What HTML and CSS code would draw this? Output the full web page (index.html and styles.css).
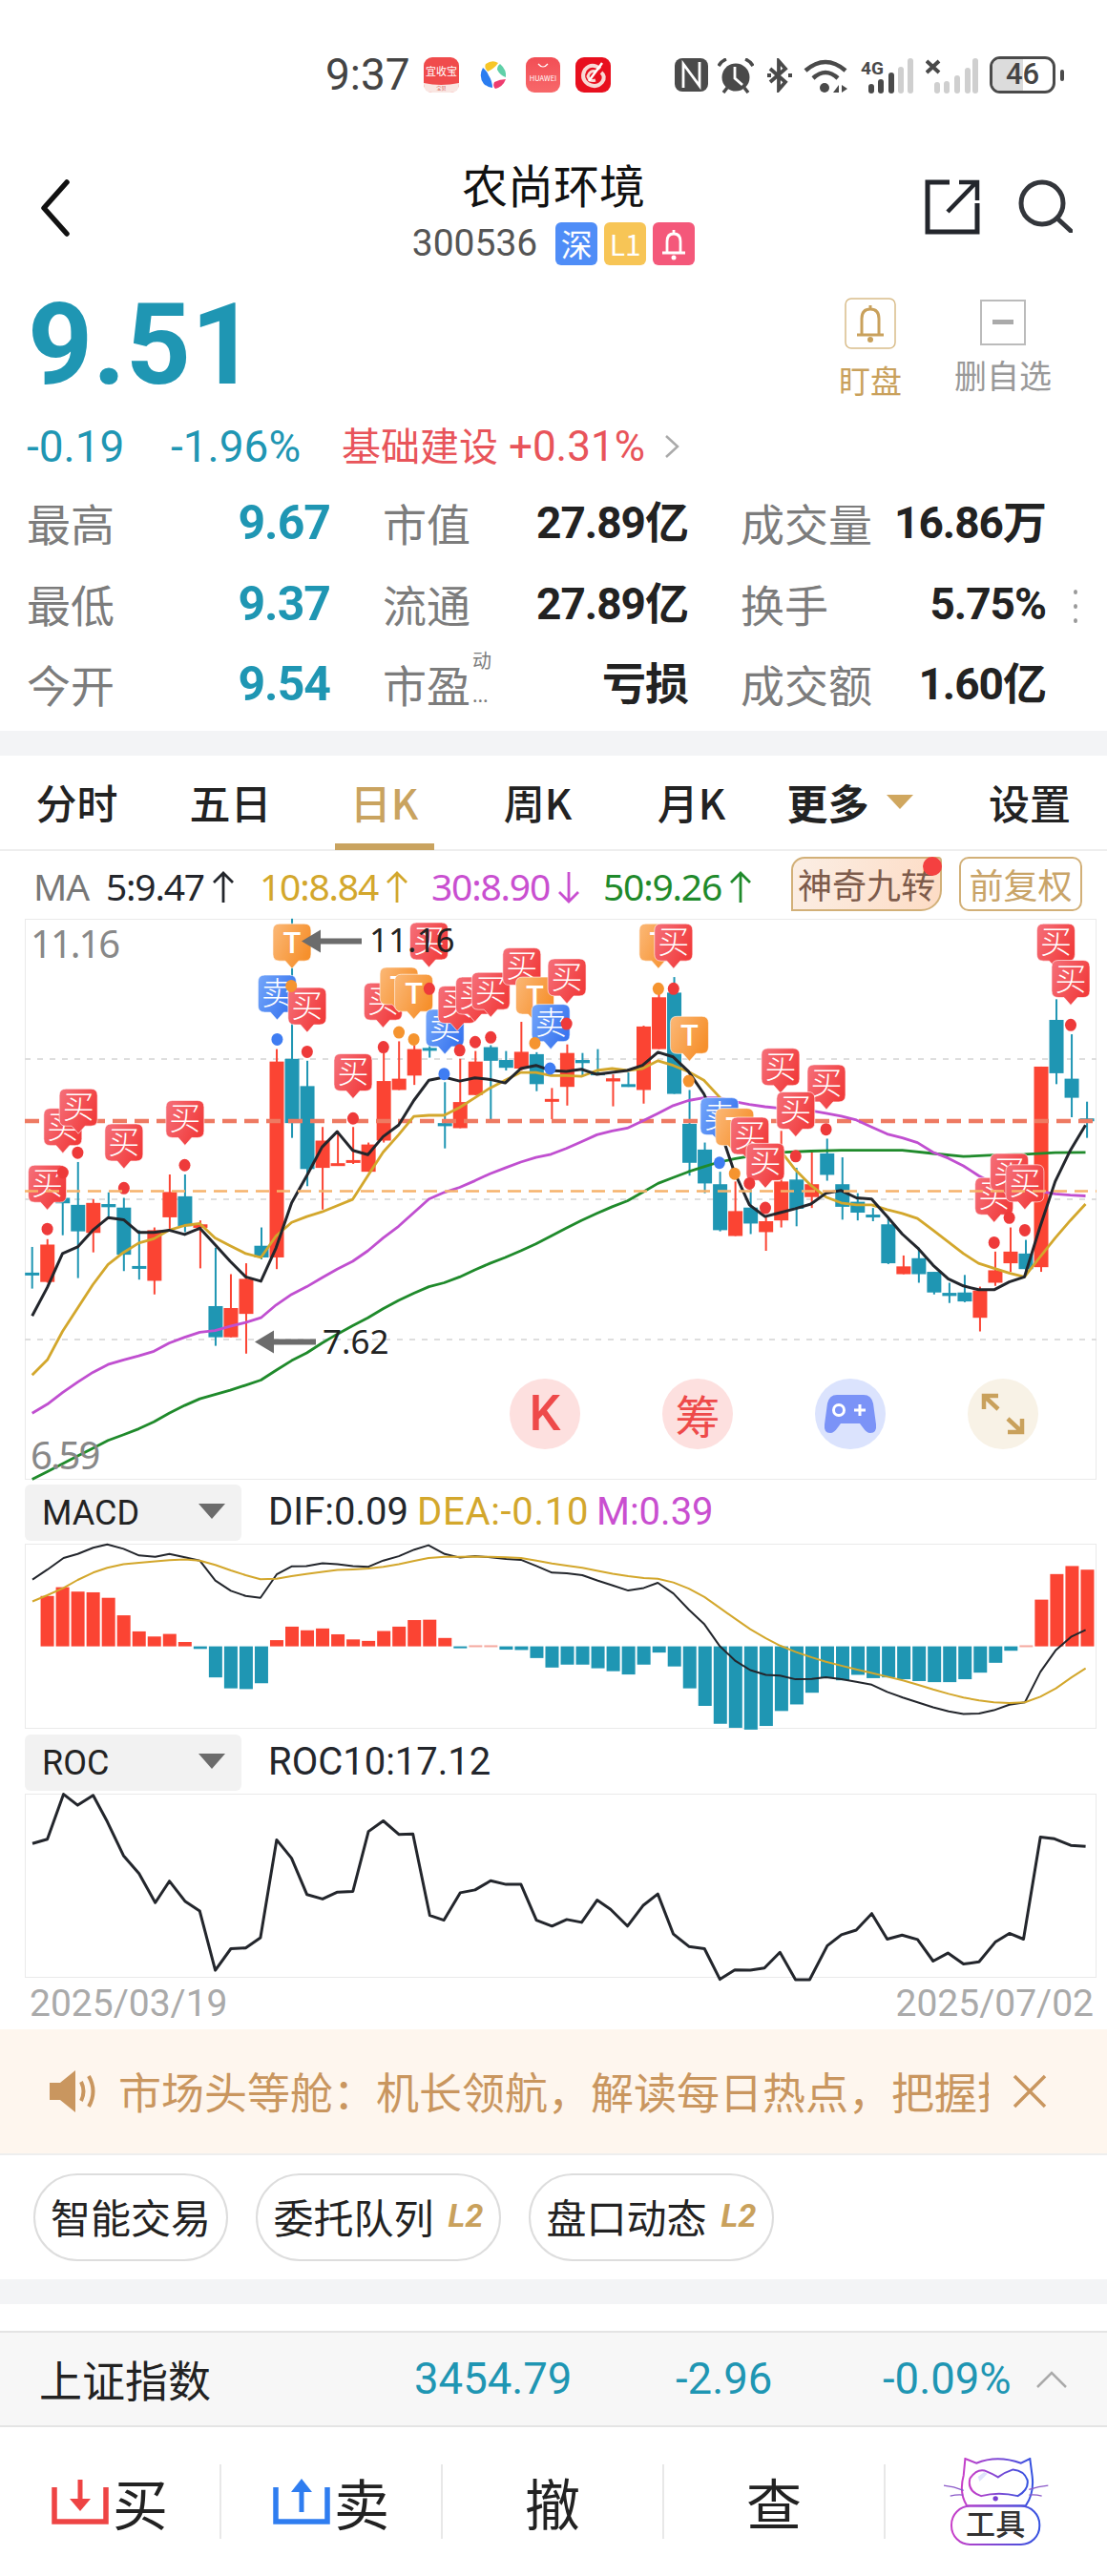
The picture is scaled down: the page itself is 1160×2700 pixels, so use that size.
FILE: index.html
```html
<!DOCTYPE html>
<html lang="zh-CN">
<head>
<meta charset="utf-8">
<title>农尚环境</title>
<link rel="stylesheet" href="styles.css">
</head>
<body>
<div class="page">

  <div class="status">
    <span class="clock">9:37</span>
    <svg class="app" width="37" height="37" viewBox="0 0 37 37"><rect width="37" height="37" rx="9" fill="#f04b4c"/><path d="M0 27 Q18 31 37 27 V28 Q37 37 28 37 H9 Q0 37 0 28Z" fill="#f9e6e2"/><text x="18.5" y="19" class="app-txt" font-size="11">宜收宝</text><text x="18.5" y="34" class="app-txt app-txt-red" font-size="5">宝贝</text></svg>
    <svg class="app app-swirl" width="28" height="37" viewBox="0 0 28 37"><path d="M6 7 Q13 2 19 6 Q15 12 8 15 Q4 11 6 7Z" fill="#f7c628"/><path d="M21 7 Q28 13 27 21 Q21 19 18 13 Q18 9 21 7Z" fill="#5fd0a8"/><path d="M27 23 Q24 31 16 33 Q13 30 15 26 Q21 23 27 23Z" fill="#ee3c6e"/><path d="M3 11 Q-2 20 4 28 Q9 32 13 32 Q13 25 9 19 Q7 14 3 11Z" fill="#2b7df0"/></svg>
    <svg class="app app-hw" width="36" height="37" viewBox="0 0 36 37"><defs><linearGradient id="hwg" x1="0" y1="0" x2="0" y2="1"><stop offset="0" stop-color="#f24e55"/><stop offset="1" stop-color="#f7686a"/></linearGradient></defs><rect width="36" height="37" rx="9" fill="url(#hwg)"/><path d="M13 7 Q18 13 23 7" fill="none" stroke="#fff" stroke-width="1.200"/><text x="18" y="25" class="app-txt" font-size="7.500">HUAWEI</text></svg>
    <svg class="app app-last" width="37" height="37" viewBox="0 0 37 37"><rect width="37" height="37" rx="9" fill="#e80f1e"/><path d="M26 12 Q17 5 10 13 Q5 22 13 28 Q22 33 28 26 Q32 20 27 16" fill="none" stroke="#f8d9d5" stroke-width="4"/><path d="M22 15 Q15 13 13 20 Q15 26 21 24" fill="none" stroke="#f8d9d5" stroke-width="3"/><path d="M14 25 L28 6" stroke="#fff" stroke-width="2.500"/></svg>

    <svg class="sys" width="35" height="35" viewBox="0 0 35 35"><rect x="0" y="0" width="35" height="35" rx="8" fill="#4a4a4a"/><path d="M9 31 V6 L26 29 V4" fill="none" stroke="#fff" stroke-width="2.800"/></svg>
    <svg class="sys sys-alarm" width="38" height="37" viewBox="0 0 38 37"><circle cx="19" cy="20" r="14.500" fill="#4a4a4a"/><path d="M18 9 V21 L26 28" fill="none" stroke="#fff" stroke-width="2.800"/><path d="M1 8 Q4 3 9 1 M37 8 Q34 3 29 1 M6 36 L10 31 M32 36 L28 31" fill="none" stroke="#4a4a4a" stroke-width="3.500"/></svg>
    <svg class="sys" width="26" height="36" viewBox="0 0 26 36"><path d="M3 11 L19 25 L12 33 V3 L19 11 L3 25" fill="none" stroke="#4a4a4a" stroke-width="3.800"/><rect x="0" y="16" width="4" height="4" fill="#4a4a4a"/><rect x="22" y="16" width="4" height="4" fill="#4a4a4a"/></svg>
    <svg class="sys" width="48" height="37" viewBox="0 0 48 37"><path d="M2 13 Q23 -5 44 13 M10 21 Q23 9 36 21" fill="none" stroke="#4a4a4a" stroke-width="4.500"/><circle cx="22" cy="31" r="5" fill="#4a4a4a"/><path d="M31 36 L37 28 V36Z M40 28 L46 32 L40 36Z" fill="#4a4a4a"/></svg>
    <svg class="sys" width="56" height="37" viewBox="0 0 56 37"><text x="0" y="17" class="sig-txt">4G</text><g fill="#4a4a4a"><rect x="8" y="27" width="6" height="10" rx="3"/><rect x="18" y="22" width="6" height="15" rx="3"/><rect x="29" y="15" width="6" height="22" rx="3"/></g><g fill="#cfcfcf"><rect x="39" y="9" width="6" height="28" rx="3"/><rect x="49" y="0" width="6" height="37" rx="3"/></g></svg>
    <svg class="sys" width="55" height="37" viewBox="0 0 55 37"><path d="M1 3 L14 15 M14 3 L1 15" stroke="#4a4a4a" stroke-width="4"/><g fill="#cfcfcf"><rect x="9" y="25" width="6" height="12" rx="3"/><rect x="19" y="24" width="6" height="13" rx="3"/><rect x="30" y="18" width="6" height="19" rx="3"/><rect x="41" y="10" width="6" height="27" rx="3"/><rect x="49" y="0" width="6" height="37" rx="3"/></g></svg>
    <div class="battery"><span class="battery-fill"></span><span class="battery-num">46</span></div>
    <span class="battery-nub"></span>
  </div>

  <div class="nav">
    <svg class="back" width="34" height="60" viewBox="0 0 34 60"><path d="M29 3 L5 30 L29 57" fill="none" stroke="#111" stroke-width="5.500" stroke-linecap="round" stroke-linejoin="round"/></svg>
    <div class="nav-mid">
      <div class="stock-name">农尚环境</div>
      <div class="stock-sub">
        <span class="stock-code">300536</span>
        <span class="tag tag-blue">深</span>
        <span class="tag tag-yellow">L1</span>
        <span class="tag tag-pink"><svg width="30" height="34" viewBox="0 0 30 34"><path d="M15 2 L15 5 M8 25 V14 Q8 6 15 6 Q22 6 22 14 V25 M3 26 H27" fill="none" stroke="#fff" stroke-width="2.800"/><circle cx="15" cy="31" r="2.500" fill="#fff"/></svg></span>
      </div>
    </div>
    <svg class="share" width="58" height="58" viewBox="0 0 58 58"><path d="M26 3 H3 V55 H55 V25" fill="none" stroke="#23262c" stroke-width="5"/><path d="M24 34 L53 4 M36 3 H55 V22" fill="none" stroke="#23262c" stroke-width="4.500"/></svg>
    <svg class="search" width="58" height="56" viewBox="0 0 58 56"><circle cx="26" cy="25" r="22" fill="none" stroke="#33363b" stroke-width="5"/><path d="M42 41 L56 54" stroke="#33363b" stroke-width="5" stroke-linecap="round"/></svg>
  </div>

  <div class="quote">
    <div class="price">9.51</div>
    <div class="action action-gold">
      <svg width="54" height="54" viewBox="0 0 54 54"><rect x="1" y="1" width="52" height="52" rx="6" fill="none" stroke="#d9bd8b" stroke-width="1.500"/><path d="M27 8 V11 M18 38 V22 Q18 12 27 12 Q36 12 36 22 V38 M13 39 H41" fill="none" stroke="#c9a15c" stroke-width="3"/><circle cx="27" cy="44" r="3" fill="#c9a15c"/></svg>
      <span>盯盘</span>
    </div>
    <div class="action action-grey">
      <svg width="48" height="48" viewBox="0 0 48 48"><rect x="1" y="1" width="46" height="46" fill="none" stroke="#bbb" stroke-width="2"/><rect x="13" y="21" width="22" height="5" fill="#aaa"/></svg>
      <span>删自选</span>
    </div>
  </div>

  <div class="change">
    <span class="down chg-a">-0.19</span>
    <span class="down chg-b">-1.96%</span>
    <span class="sector"><span class="sector-name">基础建设</span> +0.31%</span>
    <svg width="18" height="26" viewBox="0 0 18 26"><path d="M3 2 L15 13 L3 24" fill="none" stroke="#aaa" stroke-width="2.500"/></svg>
  </div>

  <div class="stats">
    <div class="stat"><span class="lbl">最高</span><span class="val teal">9.67</span></div>
    <div class="stat"><span class="lbl">市值</span><span class="val">27.89亿</span></div>
    <div class="stat"><span class="lbl">成交量</span><span class="val">16.86万</span></div>
    <div class="stat"><span class="lbl">最低</span><span class="val teal">9.37</span></div>
    <div class="stat"><span class="lbl">流通</span><span class="val">27.89亿</span></div>
    <div class="stat"><span class="lbl">换手</span><span class="val">5.75%</span></div>
    <div class="stat"><span class="lbl">今开</span><span class="val teal">9.54</span></div>
    <div class="stat"><span class="lbl lbl-pe">市盈<span class="pe-note"><span>动</span><span>...</span></span></span><span class="val">亏损</span></div>
    <div class="stat"><span class="lbl">成交额</span><span class="val">1.60亿</span></div>
    <span class="more-dots"><i></i><i></i><i></i></span>
  </div>

  <div class="band band-a"></div>

  <div class="tabs">
    <span class="tab">分时</span>
    <span class="tab">五日</span>
    <span class="tab tab-on">日K</span>
    <span class="tab">周K</span>
    <span class="tab">月K</span>
    <span class="tab tab-bold">更多<i class="caret"></i></span>
    <span class="tab tab-last">设置</span>
  </div>

  <div class="ma-row">
    <span class="ma-name">MA</span>
    <span class="ma-v ma-a c-dark">5:9.47<svg class="ma-arrow" width="22" height="34" viewBox="0 0 22 34"><path d="M11 33 V2 M1 12 L11 2 L21 12" fill="none" stroke="currentColor" stroke-width="2.800"/></svg></span>
    <span class="ma-v ma-b c-gold">10:8.84<svg class="ma-arrow" width="22" height="34" viewBox="0 0 22 34"><path d="M11 33 V2 M1 12 L11 2 L21 12" fill="none" stroke="currentColor" stroke-width="2.800"/></svg></span>
    <span class="ma-v ma-b c-purple">30:8.90<svg class="ma-arrow" width="22" height="34" viewBox="0 0 22 34"><path d="M11 1 V32 M1 22 L11 32 L21 22" fill="none" stroke="currentColor" stroke-width="2.800"/></svg></span>
    <span class="ma-v c-green">50:9.26<svg class="ma-arrow" width="22" height="34" viewBox="0 0 22 34"><path d="M11 33 V2 M1 12 L11 2 L21 12" fill="none" stroke="currentColor" stroke-width="2.800"/></svg></span>
    <span class="pick pick-magic">神奇九转<i class="pick-dot"></i></span>
    <span class="pick pick-adj">前复权</span>
  </div>

  <div class="chart-wrap">
    <svg id="kline" class="chart" width="1160" height="588" viewBox="0 963 1160 588"></svg>
    <div class="chart-tools">
      <span class="tool tool-red tool-k">K</span>
      <span class="tool tool-red">筹</span>
      <span class="tool tool-blue"><svg width="56" height="42" viewBox="0 0 56 42"><path d="M14 1 H42 Q50 1 52 10 L55 32 Q56 41 49 41 Q45 41 41 35 L38 31 H18 L15 35 Q11 41 7 41 Q0 41 1 32 L4 10 Q6 1 14 1Z" fill="#7b93f7"/><circle cx="16" cy="17" r="5.500" fill="none" stroke="#fff" stroke-width="3"/><path d="M32 17 H44 M38 11 V23" stroke="#fff" stroke-width="3"/></svg></span>
      <span class="tool tool-cream"><svg width="46" height="44" viewBox="0 0 46 44"><path d="M3 3 L18 17 M3 17 V3 H18 M43 41 L28 27 M43 27 V41 H28" fill="none" stroke="#c9a15c" stroke-width="4.500"/></svg></span>
    </div>
  </div>

  <div class="sub-head">
    <span class="picker"><span>MACD</span><i></i></span>
    <span class="sub-vals"><span class="sv-a c-dark">DIF:0.09</span><span class="sv-b c-gold">DEA:-0.10</span><span class="c-purple">M:0.39</span></span>
  </div>
  <svg id="macd" class="chart" width="1160" height="195" viewBox="0 1618 1160 195"></svg>

  <div class="sub-head">
    <span class="picker"><span>ROC</span><i></i></span>
    <span class="sub-vals c-dark">ROC10:17.12</span>
  </div>
  <svg id="roc" class="chart" width="1160" height="194" viewBox="0 1880 1160 194"></svg>

  <div class="dates"><span>2025/03/19</span><span>2025/07/02</span></div>

  <div class="notice">
    <svg width="52" height="46" viewBox="0 0 52 46"><path d="M0 14 H11 L27 1 V45 L11 32 H0Z" fill="#c9965f"/><path d="M33 13 Q38 23 33 33 M41 7 Q50 23 41 39" fill="none" stroke="#c9965f" stroke-width="4"/></svg>
    <span class="notice-txt"><span>市场头等舱：机长领航，解读每日热点，把握投资机会</span></span>
    <svg class="notice-x" width="36" height="36" viewBox="0 0 36 36"><path d="M2 2 L34 34 M34 2 L2 34" stroke="#c9965f" stroke-width="3.500"/></svg>
  </div>

  <div class="pills">
    <span class="pill pill-a">智能交易</span>
    <span class="pill pill-b">委托队列<em>L2</em></span>
    <span class="pill pill-b">盘口动态<em>L2</em></span>
  </div>

  <div class="band band-b"></div>
  <div class="gap"></div>

  <div class="index-row">
    <span class="idx-name">上证指数</span>
    <span class="idx-a down">3454.79</span>
    <span class="idx-b down">-2.96</span>
    <span class="idx-c down">-0.09%</span>
    <svg width="34" height="18" viewBox="0 0 34 18"><path d="M2 17 L17 2 L32 17" fill="none" stroke="#aaa" stroke-width="2.500"/></svg>
  </div>

  <div class="toolbar">
    <div class="tb">
      <svg width="60" height="50" viewBox="0 0 60 50"><path d="M3 10 V46 H57 V10" fill="none" stroke="#ee4444" stroke-width="5.500"/><path d="M30 2 V28" stroke="#ee4444" stroke-width="5"/><path d="M19 22 H41 L30 35Z" fill="#ee4444"/></svg>
      <span>买</span>
    </div>
    <div class="tb">
      <svg width="60" height="50" viewBox="0 0 60 50"><path d="M3 10 V46 H57 V10" fill="none" stroke="#2f7df0" stroke-width="5.500"/><path d="M30 12 V36" stroke="#2f7df0" stroke-width="5"/><path d="M19 15 H41 L30 1Z" fill="#2f7df0"/></svg>
      <span>卖</span>
    </div>
    <div class="tb"><span>撤</span></div>
    <div class="tb"><span>查</span></div>
    <div class="tb tb-last">
      <svg width="112" height="92" viewBox="85 55 335 275">
        <defs><linearGradient id="catg" x1="0" y1="0" x2="1" y2="0"><stop offset="0" stop-color="#c83fc8"/><stop offset="1" stop-color="#3452e0"/></linearGradient></defs>
        <path d="M150 110 L155 58 L190 72 Q255 45 330 72 L358 58 L365 112 Q372 165 345 205 H160 Q135 165 150 110Z" fill="none" stroke="url(#catg)" stroke-width="6"/>
        <path d="M170 120 Q190 90 215 95 Q240 105 258 116 Q280 100 305 92 Q340 95 350 125 Q355 155 320 175 Q260 160 205 175 Q160 160 170 120Z" fill="none" stroke="url(#catg)" stroke-width="6"/>
        <path d="M195 115 L215 100 L225 105 L200 130Z" fill="#dfe3fb"/>
        <path d="M88 142 Q120 145 150 158 M108 175 Q130 170 148 172 M415 142 Q385 145 355 155 M395 175 Q375 170 355 172" fill="none" stroke="#8a58c8" stroke-width="4"/>
        <circle cx="250" cy="183" r="8" fill="#7a3ed0"/>
        <rect x="112" y="207" width="276" height="120" rx="58" fill="#fff" stroke="url(#catg)" stroke-width="6"/>
        <text x="250" y="298" class="cat-txt">工具</text>
      </svg>
    </div>
  </div>

</div>
<script src="chart.js"></script>
</body>
</html>
```

FILE: styles.css
```css
* { box-sizing: border-box; }
html, body { margin: 0; padding: 0; background: #fff; }
body { font-family: "Noto Sans CJK SC", Roboto, sans-serif; color: #222; }
i, em { font-style: normal; }
svg { display: block; flex: none; }

.page { width: 1160px; height: 2700px; overflow: hidden; position: relative; }

/* status bar */
.status { height: 160px; display: flex; align-items: flex-start; padding: 60px 0 0 341px; }
.clock { font: 400 46px/37px Roboto, sans-serif; color: #444; width: 103px; }
.app { margin-right: 22px; }
.app-swirl { margin-right: 20px; }
.app-hw { margin-right: 16px; }
.app-last { margin-right: 67px; }
.app-txt { fill: #fff; text-anchor: middle; font-family: "Noto Sans CJK SC", sans-serif; }
.app-txt-red { fill: #d0443c; }
.sys { margin-right: 12px; margin-top: 1px; }
.sys-alarm { margin-right: 14px; margin-left: -2px; }
.sig-txt { font: 700 19px Roboto, sans-serif; fill: #4a4a4a; }
.battery { width: 69px; height: 39px; border: 3.500px solid #4a4a4a; border-radius: 11px; position: relative; overflow: hidden; margin-top: -1px; }
.battery-fill { display: block; width: 50%; height: 100%; background: #dcdcdc; }
.battery-num { position: absolute; left: 0; right: 0; top: 0; text-align: center; font: 500 31px/32px Roboto, sans-serif; color: #444; }
.battery-nub { width: 4px; height: 12px; background: #4a4a4a; border-radius: 2px; margin: 13px 0 0 5px; }

/* header */
.nav { height: 120px; display: flex; align-items: flex-start; position: relative; padding-left: 41px; }
.back { margin-top: 28px; }
.nav-mid { position: absolute; left: 0; right: 0; top: 8px; text-align: center; }
.stock-name { font-size: 48px; line-height: 50px; color: #111; margin-top: -1px; }
.stock-sub { display: flex; justify-content: center; align-items: center; gap: 7px; margin-top: 16px; height: 45px; }
.stock-code { font: 400 39px/45px Roboto, sans-serif; color: #555; margin-right: 12px; }
.tag { width: 44px; height: 45px; border-radius: 6px; color: #fff; font-size: 33px; line-height: 45px; text-align: center; display: flex; align-items: center; justify-content: center; }
.tag-blue { background: #4f8df7; }
.tag-yellow { background: #f7c556; font-size: 30px; }
.tag-pink { background: #f4587a; }
.share { position: absolute; left: 969px; top: 28px; }
.search { position: absolute; left: 1066px; top: 28px; }

/* price block */
.quote { height: 150px; display: flex; align-items: flex-start; padding-left: 29px; position: relative; }
.price { font: 700 119px/100px Roboto, sans-serif; color: #1f96b3; margin-top: 32px; flex: 1; }
.action { display: flex; flex-direction: column; align-items: center; font-size: 33px; line-height: 36px; white-space: nowrap; }
.action span { margin-top: 14px; }
.action-gold { color: #c9a15c; width: 66px; margin-top: 32px; margin-right: 55px; }
.action-grey { color: #999; width: 102px; margin-top: 34px; margin-right: 58px; font-size: 34px; }
.action-grey span { margin-top: 13px; }

.change { height: 76px; display: flex; align-items: center; padding-left: 28px; font: 400 46px/50px Roboto, "Noto Sans CJK SC", sans-serif; }
.down { color: #1f96b3; }
.chg-a { width: 151px; }
.chg-b { width: 179px; }
.sector { color: #e8545a; width: 337px; white-space: nowrap; font-size: 44px; }
.sector-name { font-size: 41px; }

.stats { height: 260px; padding: 0 0 0 28px; display: grid; grid-template-columns: 318px 320px 320px; column-gap: 55px; grid-auto-rows: 84.500px; position: relative; }
.stat { display: flex; justify-content: space-between; align-items: center; }
.lbl { font-size: 46px; line-height: 60px; color: #7c7c7c; margin-top: -2px; }
.val { font: 700 46px/60px Roboto, "Noto Sans CJK SC", sans-serif; color: #222; letter-spacing: -1px; }
.teal { color: #1f96b3; font-size: 50px; }
.lbl-pe { display: flex; }
.pe-note { display: flex; flex-direction: column; font-size: 20px; line-height: 24px; margin-left: 2px; height: 60px; justify-content: space-between; margin-top: -6px; }
.more-dots { position: absolute; left: 1125px; top: 112px; display: flex; flex-direction: column; gap: 10px; }
.more-dots i { width: 4px; height: 5px; background: #999; border-radius: 50%; }

.band { background: #f3f4f6; }
.band-a { height: 26px; }
.band-b { height: 26px; }

/* period tabs */
.tabs { height: 100px; display: flex; border-bottom: 2px solid #eee; padding-top: 16px; }
.tab { width: 161px; font-size: 43px; line-height: 64px; font-weight: 500; text-align: center; color: #222; position: relative; height: 82px; }
.tab-on { color: #c9a35f; }
.tab-on::after { content: ""; position: absolute; left: 29px; width: 104px; height: 7px; bottom: -1px; background: #c9a35f; }
.tab-bold { font-weight: 700; display: flex; justify-content: center; align-items: flex-start; gap: 18px; padding-left: 10px; }
.caret { width: 0; height: 0; margin-top: 25px; border-left: 14px solid transparent; border-right: 14px solid transparent; border-top: 15px solid #d0a75f; }
.tab-last { margin-left: 32px; width: 162px; }

/* moving average row */
.ma-row { height: 71px; display: flex; align-items: flex-start; padding: 3px 0 0 35px; position: relative; }
.ma-name, .ma-v { font: 400 39px/68px "Noto Sans", sans-serif; white-space: nowrap; letter-spacing: -1.200px; }
.ma-name { color: #777; width: 76px; }
.ma-v { display: flex; align-items: center; }
.ma-a { width: 161px; }
.ma-b { width: 180px; }
.ma-arrow { margin-left: 9px; margin-top: 1px; }
.c-gold { color: #d3a72c; }
.c-purple { color: #c94fd0; }
.c-green { color: #1f8a2b; }
.c-dark { color: #23262c; }
.pick { height: 57px; font-size: 36px; line-height: 53px; text-align: center; position: absolute; top: 6px; border: 2px solid #d2b078; border-radius: 10px; white-space: nowrap; }
.pick-magic { left: 829px; width: 158px; color: #7d5b4b; background: linear-gradient(100deg, #fbeee4, #fddcc5); border-radius: 14px 4px 22px 0; }
.pick-adj { left: 1005px; width: 129px; color: #c9a468; }
.pick-dot { position: absolute; right: -2px; top: -2px; width: 20px; height: 20px; border-radius: 50%; background: #f44040; }

/* charts */
.chart { overflow: visible; }
.chart-wrap { position: relative; height: 588px; }
.chart-tools { position: absolute; left: 534px; top: 482px; display: flex; gap: 86px; }
.tool { width: 74px; height: 74px; border-radius: 50%; display: flex; align-items: center; justify-content: center; font-size: 47px; line-height: 74px; }
.tool-red { background: #fde0df; color: #ee4a4a; }
.tool-k { font-weight: 500; font-size: 52px; font-family: Roboto, sans-serif; }
.tool-blue { background: #dbe3fd; }
.tool-cream { background: #f8f2e6; }

.mk-txt { fill: #fff; font-family: "Noto Sans CJK SC", sans-serif; font-weight: 300; font-size: 33px; text-anchor: middle; }
.mk-t { font-family: Roboto, sans-serif; font-weight: 500; font-size: 31px; }
.ax-txt { font: 400 40px "Noto Sans", sans-serif; fill: #888; letter-spacing: -2px; }
.hl-txt { font: 400 35px "Noto Sans", sans-serif; fill: #222; }

.sub-head { height: 67px; display: flex; padding: 5px 0 0 26px; }
.picker { width: 227px; height: 59px; background: #f2f2f2; border-radius: 6px; display: flex; align-items: center; justify-content: space-between; padding: 0 17px 0 18px; font: 400 36px Roboto, sans-serif; color: #222; }
.picker i { width: 0; height: 0; border-left: 14px solid transparent; border-right: 14px solid transparent; border-top: 16px solid #6c6c6c; margin-top: -3px; }
.sub-vals { font: 400 40px/57px Roboto, sans-serif; margin-left: 28px; white-space: pre; display: flex; }
.sv-a { width: 156px; }
.sv-b { width: 188px; letter-spacing: .7px; }
.dates { height: 53px; display: flex; justify-content: space-between; padding: 0 14px 0 31px; font: 400 39px/52px Roboto, sans-serif; color: #aaa; }

/* news strip */
.notice { height: 132px; background: #fef6ee; border-bottom: 2px solid #eee; display: flex; align-items: center; padding-left: 52px; }
.notice-txt { width: 912px; margin-left: 20px; overflow: hidden; white-space: nowrap; font-size: 45px; line-height: 60px; color: #c9965f; }
.notice-x { margin-left: 25px; }

.pills { height: 130px; display: flex; align-items: center; gap: 29px; padding-left: 35px; }
.pill { height: 92px; border: 2px solid #ddd; border-radius: 46px; font-size: 42px; line-height: 85px; white-space: nowrap; display: flex; justify-content: center; color: #222; }
.pill-a { width: 204px; }
.pill-b { width: 257px; }
.pill-b em { font: italic 700 34px/84px Roboto, sans-serif; color: #c9a15c; margin-left: 15px; }

.gap { height: 28px; }

.index-row { height: 101px; background: #f7f7f7; border-top: 2px solid #e4e4e4; border-bottom: 2px solid #e4e4e4; display: flex; align-items: center; padding-left: 41px; font: 400 45.500px Roboto, sans-serif; }
.idx-name { font-family: "Noto Sans CJK SC", sans-serif; font-size: 45px; color: #222; width: 393px; }
.idx-a { width: 274px; }
.idx-b { width: 217px; }
.idx-c { width: 160px; }

.toolbar { height: 156px; display: flex; padding-top: 39px; }
.tb { width: 232px; height: 78px; border-right: 2px solid #e8e8e8; display: flex; align-items: center; justify-content: center; gap: 4px; font-size: 58px; color: #222; }
.tb-last { border-right: 0; }
.cat-txt { font: 500 93px "Noto Sans CJK SC", sans-serif; fill: #333; text-anchor: middle; }
```

FILE: chart.js
```js
// coordinates below were read off the reference crops, then scaled to page px
var NS = 'http://www.w3.org/2000/svg';
var RED = '#fb4433', TEAL = '#1f96b3';

function lx(z) { return z / 2.703; }
function rx(z) { return 580 + z / 2.703; }
function ky(z) { return 920 + z / 2.45; }
function sx(z) { return z / 1.352; }
function sy(z) { return 1540 + z / 2.613; }

function add(svg, name, attrs, text) {
  var el = document.createElementNS(NS, name);
  for (var k in attrs) el.setAttribute(k, attrs[k]);
  if (text) el.textContent = text;
  svg.appendChild(el);
  return el;
}

function line(svg, pts, color, width) {
  var d = pts.map(function (p) { return p[0].toFixed(1) + ',' + p[1].toFixed(1); }).join(' ');
  add(svg, 'polyline', { points: d, fill: 'none', stroke: color, 'stroke-width': width, 'stroke-linejoin': 'round' });
}

function kpts(left, right) {
  var out = [];
  for (var i = 0; i < left.length; i += 2) out.push([lx(left[i]), ky(left[i + 1])]);
  for (var j = 0; j < right.length; j += 2) out.push([rx(right[j]), ky(right[j + 1])]);
  return out;
}

function spts(a) {
  var out = [];
  for (var i = 0; i < a.length; i += 2) out.push([sx(a[i]), sy(a[i + 1])]);
  return out;
}

// type, body top, body bottom, wick top, wick bottom
var candles = [
  ['t',1014,1017,948,1055],['r',942,1038,928,1040],['t',822,836,820,918],['t',840,908,730,1028],
  ['r',835,912,825,962],['t',838,846,808,875],['t',847,968,822,1010],['t',997,1000,905,1032],
  ['r',905,1035,898,1070],['r',807,872,762,905],['t',818,895,762,910],['r',890,899,880,1003],
  ['t',1100,1180,950,1202],['r',1105,1180,1018,1180],['r',1030,1120,990,1222],['t',945,975,898,980],
  ['r',472,975,440,1005],['t',465,630,105,668],['t',535,748,470,792],['r',675,745,640,852],
  ['r',733,740,650,740],['r',725,731,640,735],['r',685,755,680,755],['r',522,675,450,680],
  ['r',516,545,420,545],['r',440,508,430,532],['t',437,441,430,462],['t',630,638,525,695],
  ['r',576,643,465,643],['r',472,558,445,558],['t',435,470,430,622],['t',468,488,445,495],
  ['r',447,490,370,495],['t',453,530,448,548],['r',568,572,540,620],
  ['r',450,537,428,585],['t',468,476,450,510],['t',500,506,440,505],['r',515,523,505,587],
  ['t',530,536,500,537],['r',382,545,380,580],['r',307,440,290,440],['t',295,555,255,555],
  ['t',632,732,545,765],['t',698,785,680,810],['t',787,905,755,908],['r',856,920,780,920],
  ['t',847,888,800,915],['r',882,910,870,958],['r',780,880,650,898],['t',775,850,745,895],
  ['r',787,820,705,848],['t',708,763,670,778],['t',787,845,718,878],['t',832,860,810,880],
  ['t',865,870,848,882],['t',890,990,870,992],['r',998,1018,970,1018],['t',977,1018,950,1040],
  ['t',1012,1065,1012,1070],['t',1066,1074,1040,1092],['t',1065,1088,1020,1090],['r',1060,1130,1050,1165],
  ['r',1008,1040,960,1048],['r',960,990,898,1012],['t',965,1005,930,1008],['r',485,1000,485,1012],
  ['t',365,502,312,530],['t',516,565,402,615],['t',618,624,575,668]
];

var ma5 = kpts(
  [91,1125,134,1052,177,965,220,948,263,905,306,873,350,878,393,911,436,911,479,905,523,916,566,900,609,942,652,985,696,1025,739,1036,782,950,826,835,869,765,912,692,955,652,999,700,1042,711,1085,665,1129,635,1172,572,1215,520,1258,512,1302,522,1345,514,1388,518,1431,527,1475,490,1518,482,1561,495],
  [36,497,79,492,123,505,166,500,209,495,252,482,296,448,339,460,382,497,426,555,469,640,512,755,555,840,599,870,642,860,685,850,729,838,772,810,815,803,858,822,901,825,945,870,988,915,1031,950,1075,995,1118,1030,1161,1048,1204,1058,1248,1058,1291,1038,1334,1025,1377,900,1421,780,1464,700,1507,635]);
var ma10 = kpts(
  [91,1277,134,1238,177,1165,220,1105,263,1045,306,993,350,962,393,938,436,927,479,905,523,893,566,888,609,925,652,945,696,965,739,975,782,920,826,885,869,870,912,858,955,842,999,826,1042,765,1085,705,1129,660,1172,613,1215,610,1258,610,1302,590,1345,565,1388,540,1431,520,1475,500,1518,500,1561,508],
  [36,508,79,510,123,495,166,490,209,495,252,490,296,470,339,482,382,498,426,520,469,562,512,620,555,680,642,700,685,750,729,790,772,820,815,835,858,840,901,840,945,852,988,862,1031,875,1075,905,1118,935,1161,965,1204,990,1248,1003,1291,1015,1334,1025,1377,975,1421,925,1464,880,1507,838]);
var ma30 = kpts(
  [91,1375,134,1352,177,1322,220,1295,263,1270,306,1250,350,1238,393,1228,436,1216,479,1195,523,1180,566,1167,609,1163,652,1152,696,1142,739,1130,782,1097,826,1070,869,1050,912,1027,955,1005,999,985,1042,958,1085,925,1129,895,1172,860,1215,825,1258,808,1302,795,1345,778,1388,760,1431,745,1475,730,1518,718,1561,710],
  [36,695,79,678,123,660,166,650,209,643,252,625,296,605,339,585,382,572,426,565,469,565,512,575,555,582,599,588,642,592,685,590,729,598,772,605,815,612,858,622,901,640,945,658,988,668,1031,680,1075,705,1118,720,1161,740,1204,765,1248,785,1291,795,1334,800,1377,805,1421,812,1464,815,1507,817]);
var ma50 = kpts(
  [91,1545,134,1525,177,1505,220,1485,263,1465,306,1445,350,1430,393,1415,436,1397,479,1375,523,1355,566,1338,609,1327,652,1316,696,1303,739,1290,782,1265,826,1240,869,1220,912,1195,955,1172,999,1150,1042,1130,1085,1107,1129,1085,1172,1067,1215,1050,1258,1040,1302,1025,1345,1007,1388,990,1431,975,1475,958,1518,940,1561,920],
  [36,900,79,880,123,862,166,845,209,830,252,808,296,785,339,770,382,755,426,742,469,730,512,722,555,715,642,705,729,702,815,700,901,700,988,700,1075,708,1161,716,1248,712,1334,710,1421,706,1507,705]);

// kind, center x, top y. l = left crop, r = right crop
var markers = [
  ['b','l',134,738],['b','l',178,592],['b','l',222,542],['b','l',351,632],['b','l',524,572],
  ['b','l',1000,452],['s','l',785,250],['t','l',827,118],['b','l',870,282],['b','l',1215,115],
  ['b','l',1085,270],['t','l',1130,230],['t','l',1172,248],['s','l',1260,338],['b','l',1295,278],
  ['b','l',1345,255],['b','l',1390,243],['b','l',1478,180],['t','l',1515,255],['s','l',1560,325],
  ['b','r',38,208],['t','r',297,118],['b','r',340,118],['t','r',385,356],['s','r',470,565],
  ['t','r',513,592],['b','r',556,615],['b','r',643,438],['b','r',773,480],['b','r',686,550],
  ['b','r',600,682],['b','r',1248,770],['b','r',1291,708],['b','r',1335,737],['b','r',1423,118],
  ['b','r',1465,212]
];

var dots = [
  ['#ee3a3a','l',134,902],['#ee3a3a','l',220,706],['#ee3a3a','l',178,757],['#ee3a3a','l',351,797],
  ['#ee3a3a','l',523,738],['#ee3a3a','l',870,447],['#ee3a3a','l',1000,618],['#ee3a3a','l',1086,435],
  ['#ee3a3a','l',1302,443],['#ee3a3a','l',1346,422],['#ee3a3a','l',1390,410],['#ee3a3a','l',1216,285],
  ['#3f7df2','l',785,415],['#3f7df2','l',1258,504],['#3f7df2','l',1558,490],
  ['#f5942f','l',1130,397],['#f5942f','l',1172,415],['#f5942f','l',1515,425],['#f5942f','l',825,278],
  ['#f5942f','r',297,285],['#ee3a3a','r',340,285],['#ee3a3a','r',37,375],['#f5942f','r',383,522],
  ['#3f7df2','r',470,732],['#f5942f','r',513,760],['#ee3a3a','r',555,785],['#ee3a3a','r',600,848],
  ['#ee3a3a','r',686,715],['#ee3a3a','r',772,646],['#ee3a3a','r',1248,937],['#ee3a3a','r',1291,873],
  ['#ee3a3a','r',1335,905],['#ee3a3a','r',1465,378]
];

function grad(defs, id, a, b) {
  var g = add(defs, 'linearGradient', { id: id, x1: 0, y1: 0, x2: 1, y2: .5 });
  add(g, 'stop', { offset: 0, 'stop-color': a });
  add(g, 'stop', { offset: 1, 'stop-color': b });
}

function marker(svg, m) {
  var cx = (m[1] == 'l' ? lx(m[2]) : rx(m[2])), top = ky(m[3]);
  var d = 'M' + (cx - 13) + ' ' + top + ' h26 q7 0 7 7 v25 q0 7 -7 7 h-6 l-7 8 l-7 -8 h-6 q-7 0 -7 -7 v-25 q0 -7 7 -7z';
  add(svg, 'path', { d: d, fill: 'url(#mk-' + m[0] + ')', stroke: '#fff', 'stroke-opacity': .6, 'stroke-width': 1 });
  var label = { b: '买', s: '卖', t: 'T' }[m[0]];
  add(svg, 'text', { x: cx, y: top + 31, 'class': 'mk-txt' + (m[0] == 't' ? ' mk-t' : '') }, label);
}

function arrow(svg, tip, tail, y) {
  add(svg, 'path', { d: 'M' + tip + ' ' + y + ' l20 -12 v9 H' + tail + ' v6 H' + (tip + 20) + ' v9z', fill: '#6c6c6c' });
}

function drawKline() {
  var svg = document.getElementById('kline');
  var defs = add(svg, 'defs', {});
  grad(defs, 'mk-b', '#f5707a', '#f13c3c');
  grad(defs, 'mk-s', '#74a6fa', '#3a76ef');
  grad(defs, 'mk-t', '#fbb877', '#f6902c');

  add(svg, 'rect', { x: 26.5, y: 963.5, width: 1122, height: 587, fill: 'none', stroke: '#eaeaea' });
  [1110, 1257, 1404].forEach(function (y) {
    add(svg, 'path', { d: 'M26 ' + y + ' H1149', stroke: '#dedede', 'stroke-width': 2, 'stroke-dasharray': '6 7' });
  });

  candles.forEach(function (c, i) {
    var x = 33.7 + 16.02 * i, col = c[0] == 'r' ? RED : TEAL;
    add(svg, 'rect', { x: x - 1, y: ky(c[3]), width: 2, height: ky(c[4]) - ky(c[3]), fill: col });
    add(svg, 'rect', { x: x - 7.5, y: ky(c[1]), width: 15, height: Math.max(ky(c[2]) - ky(c[1]), 3), fill: col });
  });

  add(svg, 'path', { d: 'M26 1175 H1149', stroke: '#ee7a62', 'stroke-width': 4.5, 'stroke-dasharray': '15 8' });

  line(svg, ma50, '#1f8a2b', 2.8);
  line(svg, ma30, '#c04fd0', 2.8);
  line(svg, ma10, '#d3a72c', 2.8);
  line(svg, ma5, '#23262c', 3);

  add(svg, 'text', { x: 32, y: 1004, 'class': 'ax-txt' }, '11.16');
  add(svg, 'text', { x: 32, y: 1540, 'class': 'ax-txt' }, '6.59');

  markers.forEach(function (m) { marker(svg, m); });
  dots.forEach(function (d) {
    add(svg, 'ellipse', { cx: d[1] == 'l' ? lx(d[2]) : rx(d[2]), cy: ky(d[3]), rx: 6, ry: 6.5, fill: d[0] });
  });

  add(svg, 'path', { d: 'M26 1248.500 H1149', stroke: '#f6b26b', 'stroke-width': 2.5, 'stroke-dasharray': '14 8' });

  arrow(svg, 316, 379, 986.5);
  add(svg, 'text', { x: 387, y: 998, 'class': 'hl-txt' }, '11.16');
  arrow(svg, 267, 331, 1406.5);
  add(svg, 'text', { x: 338, y: 1419, 'class': 'hl-txt' }, '7.62');
}

var macdTops = [347,323,335,337,352,400,444,458,451,473,492,570,600,602,586,468,431,441,436,452,466,470,443,431,413,412,462,488,482,484,
  494,495,517,543,535,535,545,553,562,535,502,540,600,648,697,708,713,703,662,644,612,570,578,563,572,570,575,580,583,583,575,557,530,497,
  483,357,287,265,275];

function drawMacd() {
  var svg = document.getElementById('macd');
  add(svg, 'rect', { x: 26.5, y: 1618.5, width: 1122, height: 193, fill: 'none', stroke: '#eaeaea' });
  macdTops.forEach(function (top, k) {
    var x = sx(67 + 21.67 * k), col = top < 485 ? RED : TEAL;
    if (k == 28 || k == 29 || k == 64) { col = '#f4a9a0'; top = 482; }
    var y1 = Math.min(sy(top), sy(485)), y2 = Math.max(sy(top), sy(485));
    add(svg, 'rect', { x: x - 7, y: y1, width: 14, height: Math.max(y2 - y1, 2), fill: col });
  });
  line(svg, spts([46,302,67,275,90,243,110,232,132,215,152,206,175,218,197,236,220,240,240,232,262,241,283,250,305,305,327,333,348,347,369,352,392,288,413,266,434,265,457,257,478,260,500,265,522,267,543,250,565,238,587,220,607,208,630,232,652,242,673,238,695,241,717,246,738,248,760,265,782,283,803,285,825,290,847,305,868,318,890,332,912,325,932,311,954,340,976,385,998,425,1020,485,1042,525,1063,550,1085,563,1105,565,1127,575,1150,574,1170,570,1192,575,1213,582,1235,590,1257,610,1279,625,1300,638,1322,652,1344,663,1365,670,1387,669,1408,660,1430,645,1452,638,1474,555,1496,495,1518,458,1538,440]), '#23262c', 2);
  line(svg, spts([46,362,67,345,90,325,110,303,132,283,152,270,175,260,197,256,220,252,240,249,262,247,283,250,305,262,327,277,348,290,369,301,392,300,413,293,434,287,457,281,478,276,500,274,522,272,543,267,565,260,587,251,607,243,630,240,652,240,673,239,695,240,717,241,738,243,760,250,782,258,803,264,825,270,847,278,868,286,890,293,912,298,932,300,954,310,976,327,998,350,1020,380,1042,410,1063,438,1085,463,1105,483,1127,500,1150,515,1170,527,1192,538,1213,548,1235,558,1257,568,1279,578,1300,590,1322,603,1344,615,1365,625,1387,633,1408,638,1430,640,1452,638,1474,623,1496,600,1518,570,1538,545]), '#d3a72c', 2);
}

function drawRoc() {
  var svg = document.getElementById('roc');
  add(svg, 'rect', { x: 26.5, y: 1880.5, width: 1122, height: 192, fill: 'none', stroke: '#eaeaea' });
  line(svg, spts([46,1025,67,1013,90,890,110,920,132,893,152,965,175,1058,197,1107,220,1187,240,1128,262,1183,283,1210,305,1372,327,1313,348,1311,369,1283,392,1015,413,1065,435,1165,457,1177,478,1158,500,1156,522,992,543,963,565,1000,585,999,609,1222,629,1235,652,1160,673,1152,695,1127,717,1137,738,1137,760,1235,782,1251,803,1233,824,1241,846,1180,865,1205,889,1251,911,1195,932,1163,954,1273,976,1307,998,1313,1020,1397,1041,1371,1063,1372,1083,1366,1105,1323,1127,1398,1147,1398,1172,1305,1192,1275,1213,1262,1235,1217,1257,1287,1278,1276,1300,1288,1322,1347,1343,1325,1365,1355,1387,1349,1410,1295,1430,1271,1450,1287,1474,1007,1494,1012,1517,1030,1538,1033]), '#23262c', 3);
}

drawKline();
drawMacd();
drawRoc();
```
